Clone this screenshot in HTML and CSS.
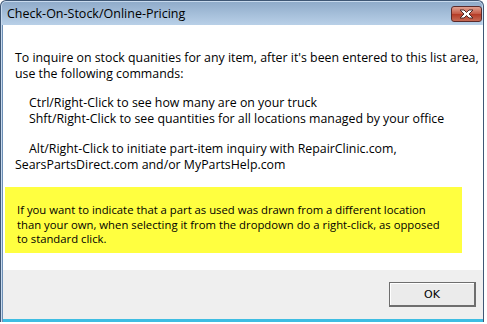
FILE: index.html
```html
<!DOCTYPE html>
<html>
<head>
<meta charset="utf-8">
<link rel="stylesheet" href="styles.css">
</head>
<body>
<div class="window">
  <div class="titlebar">
    <span class="title">Check-On-Stock/Online-Pricing</span>
    <span class="close">
      <svg width="17" height="10" viewBox="0 0 17 10">
        <path d="M2 1 H6 L8.5 3.5 L11 1 H15 L11 5 L15 9 H11 L8.5 6.5 L6 9 H2 L6 5 Z" fill="#fff" stroke="#4a2a2a" stroke-width="1" stroke-linejoin="round"/>
      </svg>
    </span>
  </div>
  <div class="client">
    <div class="content">
      <p class="para">To inquire on stock quanities for any item, after it's been entered to this list area,<br>use the following commands:</p>
      <p class="para indent">Ctrl/Right-Click to see how many are on your truck<br>Shft/Right-Click to see quantities for all locations managed by your office</p>
      <p class="para alt"><span class="ind">Alt/Right-Click to initiate part-item inquiry with RepairClinic.com,</span><br>SearsPartsDirect.com and/or MyPartsHelp.com</p>
      <div class="note">If you want to indicate that a part as used was drawn from a different location<br>than your own, when selecting it from the dropdown do a right-click, as opposed<br>to standard click.</div>
    </div>
    <div class="footer">
      <button class="ok">OK</button>
    </div>
  </div>
</div>
</body>
</html>
```
FILE: styles.css
```css
html, body {
  margin: 0;
  padding: 0;
  background: #ffffff;
}
.window {
  width: 482px;
  height: 321px;
  border: 1px solid #3f5775;
  border-bottom: none;
  border-radius: 6px 6px 0 0;
  display: flex;
  flex-direction: column;
  background: linear-gradient(#8eaac9, #bcd3ea 26px);
  box-shadow: inset 0 0 0 1px #c8daee;
  font-family: "Open Sans", "Liberation Sans", sans-serif;
  color: #000;
}
.titlebar {
  height: 24px;
  display: flex;
  align-items: center;
  justify-content: space-between;
  padding: 0 1px 0 6px;
}
.title {
  font-size: 12.5px;
  color: #000;
  margin-top: 1px;
}
.close {
  width: 29px;
  height: 14px;
  margin-top: 2px;
  border: 1px solid #5b2a2a;
  border-radius: 3px;
  background: linear-gradient(#e0a191, #c45843 50%, #b43a25 51%, #c66a55);
  display: flex;
  align-items: center;
  justify-content: center;
}
.close svg { display: block; }
.client {
  flex: 1;
  display: flex;
  flex-direction: column;
  margin: 0 0 0 1px;
  border-left: 1px solid #6d8fb5;
  background: #ffffff;
}
.content {
  flex: 1;
  font-size: 12.35px;
  line-height: 15.5px;
  padding: 25px 0 0 12px;
  white-space: nowrap;
}
.para { margin: 0; }
.indent {
  padding-left: 14px;
  margin-top: 14px;
}
.alt {
  margin-top: 15px;
}
.ind { padding-left: 14px; }
.note {
  margin: 15px 0 0 -10px;
  width: 435px;
  background: #ffff40;
  padding: 16px 10px 0 12px;
  height: 50px;
  font-size: 11.3px;
  line-height: 14.5px;
}
.footer {
  background: #efefef;
  border-bottom: 3px solid #3ebde2;
  display: flex;
  align-items: flex-start;
  justify-content: flex-end;
  padding: 12px 7px 0 0;
  box-sizing: border-box;
  height: 52px;
}
.ok {
  width: 87px;
  height: 25px;
  background: #ebebeb;
  border: 1px solid #6e6e6e;
  border-right-width: 2px;
  border-bottom-width: 2px;
  box-shadow: inset 1px 1px 0 #fff;
  font-family: "DejaVu Sans", "Liberation Sans", sans-serif;
  font-size: 11px;
  color: #000;
  padding: 0;
}
```
